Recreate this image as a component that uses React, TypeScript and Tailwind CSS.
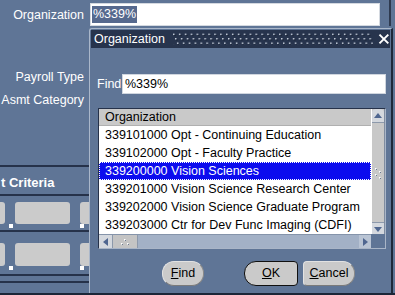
import React from "react";

const rows = [
  "339101000 Opt - Continuing Education",
  "339102000 Opt - Faculty Practice",
  "339200000 Vision Sciences",
  "339201000 Vision Science Research Center",
  "339202000 Vision Science Graduate Program",
  "339203000 Ctr for Dev Func Imaging (CDFI)",
];

function Arrow({ dir }: { dir: "up" | "down" | "left" | "right" }) {
  const pts = {
    up: "1,7 5,2 9,7",
    down: "1,3 5,8 9,3",
    left: "7,1 2,5 7,9",
    right: "3,1 8,5 3,9",
  }[dir];
  return (
    <svg width="10" height="10" viewBox="0 0 10 10">
      <polygon points={pts} fill="#4f6690" />
    </svg>
  );
}

function Grip({ vertical }: { vertical?: boolean }) {
  return (
    <svg width={vertical ? 8 : 10} height={vertical ? 12 : 8} viewBox={vertical ? "0 0 8 12" : "0 0 10 8"}>
      {(vertical
        ? [
            [1, 1],
            [5, 4],
            [1, 7],
            [5, 10],
          ]
        : [
            [4, 1],
            [1, 5],
            [7, 5],
          ]
      ).map(([x, y], i) => (
        <g key={i}>
          <rect x={x} y={y} width="1.5" height="1.5" fill="#ffffff" />
          <rect x={x + 1} y={y + 1} width="1" height="1" fill="#6b7a90" />
        </g>
      ))}
    </svg>
  );
}

function Btn({
  children,
  w,
  shape,
  main,
}: {
  children: React.ReactNode;
  w: string;
  shape: string;
  main?: boolean;
}) {
  return (
    <div
      className={`${w} ${shape} h-[25px] flex items-center justify-center bg-[#cacaca] text-black text-[12.5px] ${
        main ? "border border-[#101010]" : "border border-[#e2e2e2] border-b-[#7a7a7a] border-r-[#8a8a8a]"
      }`}
    >
      {children}
    </div>
  );
}

export default function App() {
  return (
    <div className="relative w-[395px] h-[295px] overflow-hidden bg-[#5f7596] font-['Liberation_Sans',Arial,sans-serif] text-[12.5px] text-white border-b-2 border-[#1c2638]">
      {/* page underneath */}
      <div className="flex h-[29px] pt-[3px]">
        <div className="w-[84px] text-right leading-[23px] pt-[1px]">Organization</div>
        <div className="ml-[6px] w-[290px] h-[23px] bg-white border border-[#d4d9e0] flex items-center pl-[1px]">
          <span className="bg-[#56698e] text-white leading-[17px] px-[1px]">%339%</span>
        </div>
        <div className="ml-[9px] w-[2px] h-[26px] -mt-[3px] bg-[#2e3a50]" />
      </div>

      <div className="flex flex-col w-[89px]">
        <div className="mt-[40px] leading-[16px] text-right pr-[5px]">Payroll Type</div>
        <div className="mt-[7px] leading-[16px] text-right pr-[5px]">Asmt Category</div>
        <div className="mt-[57px] h-[2px] bg-[#26324a]" />
        <div className="mt-[8px] leading-[16px] font-bold text-[13px] pl-[1px]">t Criteria</div>
        <div className="mt-[3px] h-[2px] bg-[#26324a]" />
        <div className="mt-[6px] flex h-[22px]">
          <div className="w-[6px] bg-[#cbcbcb] rounded-r-[3px]" />
          <div className="ml-[10px] w-[60px] bg-[#cbcbcb] rounded-[3px]" />
          <div className="ml-[10px] w-[10px] bg-[#cbcbcb] rounded-l-[3px]" />
        </div>
        <div className="flex h-[4px]">
          <div className="ml-[9px] w-[4px] bg-white" />
          <div className="ml-[67px] w-[4px] bg-white" />
        </div>
        <div className="mt-[2px] h-[2px] bg-[#26324a]" />
        <div className="mt-[11px] flex h-[23px]">
          <div className="w-[6px] bg-[#cbcbcb] rounded-r-[3px]" />
          <div className="ml-[10px] w-[60px] bg-[#cbcbcb] rounded-[3px]" />
          <div className="ml-[10px] w-[10px] bg-[#cbcbcb] rounded-l-[3px]" />
        </div>
        <div className="flex h-[4px]">
          <div className="ml-[9px] w-[4px] bg-white" />
          <div className="ml-[67px] w-[4px] bg-white" />
        </div>
        <div className="mt-[4px] h-[2px] bg-[#26324a]" />
        <div className="mt-[5px] h-[2px] bg-[#26324a]" />
      </div>

      {/* dialog window */}
      <div className="absolute left-[89px] top-[28px] w-[304px] h-[265px] flex flex-col bg-[#5f7596] border-l border-t border-[#aab7ca] border-r-2 border-r-[#1e2839] rounded-tl-[3px]">
        <div className="mx-[1px] mt-[1px] h-[18px] bg-[#27344d] flex items-center">
          <span className="pl-[3px] leading-[18px]">Organization</span>
          <svg className="ml-[8px]" width="204" height="12" viewBox="0 0 204 12">
            <defs>
              <pattern id="dots" width="6" height="12" patternUnits="userSpaceOnUse">
                <rect x="0" y="0.5" width="1.5" height="1.5" fill="#c9d1dd" />
                <rect x="1.5" y="2" width="1" height="1" fill="#0e1522" />
                <rect x="2" y="5" width="1.5" height="1.5" fill="#c9d1dd" />
                <rect x="3.5" y="6.5" width="1" height="1" fill="#0e1522" />
                <rect x="4" y="9.5" width="1.5" height="1.5" fill="#c9d1dd" />
                <rect x="5.5" y="11" width="1" height="1" fill="#0e1522" />
              </pattern>
            </defs>
            <rect width="204" height="12" fill="url(#dots)" />
          </svg>
          <svg className="ml-[5px]" width="12" height="12" viewBox="0 0 12 12">
            <path d="M1.5 1.5 L10.5 10.5 M10.5 1.5 L1.5 10.5" stroke="#ffffff" strokeWidth="2" />
          </svg>
        </div>

        <div className="mt-[26px] flex items-center h-[20px]">
          <span className="pl-[7px] w-[32px]">Find</span>
          <div className="w-[264px] h-[20px] bg-white border border-[#d0d6df] text-black flex items-center pl-[2px]">
            %339%
          </div>
        </div>

        <div className="mt-[14px] ml-[8px] w-[288px] h-[141px] flex flex-col border-l border-t border-[#26324a] border-r border-r-[#a9b5c7] border-b border-b-[#a9b5c7] bg-[#5f7596]">
          <div className="flex h-[125px]">
            <div className="w-[272px] flex flex-col bg-white text-black">
              <div className="h-[17px] bg-[#c9c9c9] leading-[17px] pl-[6px] border-b border-[#b0b0b0]">Organization</div>
              {rows.map((r, i) => (
                <div
                  key={i}
                  className={`h-[18px] leading-[18px] pl-[6px] whitespace-nowrap ${
                    i === 2 ? "bg-[#0c0cee] text-white outline-1 outline-dotted outline-white -outline-offset-1" : ""
                  }`}
                >
                  {r}
                </div>
              ))}
            </div>
            <div className="w-[14px] flex flex-col bg-[#c8c8c8] border-l border-white border-r border-r-[#7f8ca0]">
              <div className="h-[14px] flex items-center justify-center rounded-t-[4px] border-b border-[#8d99ab] bg-[#d4d8de]">
                <Arrow dir="up" />
              </div>
              <div className="flex-1 flex items-center justify-center">
                <Grip vertical />
              </div>
              <div className="h-[12px] flex items-center justify-center border-t border-[#8d99ab] bg-[#d4d8de]">
                <Arrow dir="down" />
              </div>
            </div>
          </div>
          <div className="flex h-[15px]">
            <div className="w-[272px] flex bg-[#a3b1c6] border-t border-[#8594aa]">
              <div className="w-[14px] flex items-center justify-center bg-[#d4d8de] border-r border-[#8d99ab]">
                <Arrow dir="left" />
              </div>
              <div className="w-[25px] flex items-center justify-center bg-[#c4c4c4] border-r border-[#8d99ab]">
                <Grip />
              </div>
              <div className="flex-1" />
              <div className="w-[12px] flex items-center justify-center bg-[#b9c4d4]">
                <Arrow dir="right" />
              </div>
            </div>
            <div className="flex-1" />
          </div>
        </div>

        <div className="mt-[12px] ml-[72px] flex">
          <Btn w="w-[42px]" shape="rounded-[12px]">
            <span className="underline">F</span>ind
          </Btn>
          <div className="ml-[40px]">
            <Btn w="w-[54px]" shape="rounded-l-[12px] rounded-r-[4px]" main>
              <span className="underline">O</span>K
            </Btn>
          </div>
          <div className="ml-[5px]">
            <Btn w="w-[52px]" shape="rounded-l-[4px] rounded-r-[12px]">
              <span className="underline">C</span>ancel
            </Btn>
          </div>
        </div>
      </div>
    </div>
  );
}
